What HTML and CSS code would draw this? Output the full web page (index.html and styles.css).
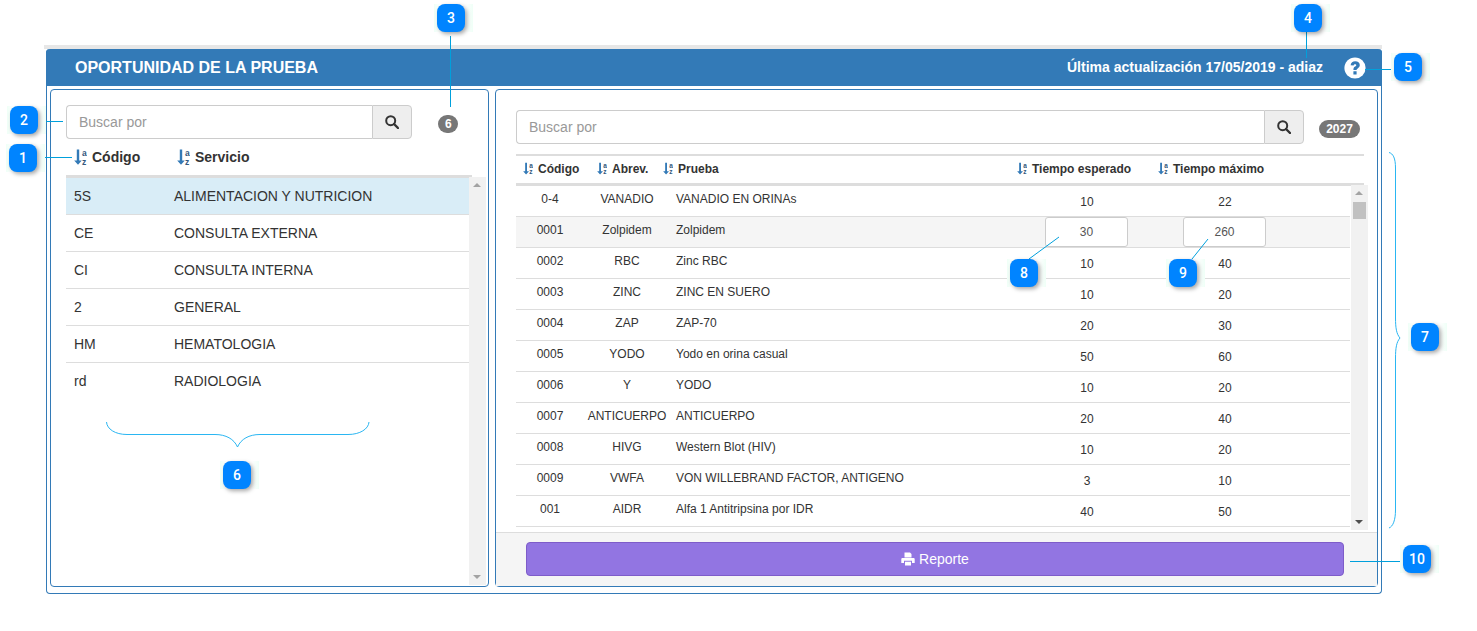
FILE: index.html
```html
<!DOCTYPE html>
<html lang="es">
<head>
<meta charset="utf-8">
<title>Oportunidad de la prueba</title>
<link rel="stylesheet" href="styles.css">
</head>
<body>
<svg class="defs" width="0" height="0" aria-hidden="true">
  <symbol id="search" viewBox="0 0 14 14">
    <circle cx="5.700" cy="5.700" r="4.500" fill="none" stroke="#333" stroke-width="2"/>
    <path d="M9 9l4 4" stroke="#333" stroke-width="2.400" stroke-linecap="round"/>
  </symbol>
</svg>

<div class="page">
  <div class="band"></div>
  <section class="panel">
    <header class="heading">
      <h1 class="title">OPORTUNIDAD DE LA PRUEBA</h1>
      <span class="updated">Última actualización 17/05/2019 - adiaz</span>
      <svg class="help" viewBox="0 0 22 22" aria-hidden="true">
        <circle cx="11" cy="11" r="10.600" fill="#fff"/>
        <path d="M6.600 8.200C6.900 5.600 8.800 4.200 11.200 4.200c2.700 0 4.600 1.500 4.600 3.800 0 1.800-1 2.700-2.100 3.400-.9.600-1.100.9-1.100 1.700H9.400c0-1.900.5-2.700 1.700-3.500.8-.5 1.200-.8 1.200-1.400 0-.6-.5-1-1.200-1-.8 0-1.300.5-1.500 1.300zM9.400 14.200h3.200v3.300H9.400z" fill="#337ab7"/>
      </svg>
    </header>
    <div class="panel-body">

      <div class="box box-left">
        <div class="toolbar toolbar-left">
          <div class="search search-left">
            <input class="search-input" type="text" placeholder="Buscar por">
            <button class="search-btn" type="button"><svg class="search-icon"><use href="#search"/></svg></button>
          </div>
          <span class="count count-left">6</span>
        </div>
        <div class="list-head">
          <div class="list-head-cell first"><svg class="sort-lg" viewBox="0 0 13 16" aria-hidden="true"><path d="M2.800 0.500h2.400v11h2.600L4 15.800 0.200 11.500h2.600z" fill="#337ab7"/><text x="8" y="7" class="sort-letter">a</text><text x="8" y="15.500" class="sort-letter">z</text></svg><b>Código</b></div>
          <div class="list-head-cell"><svg class="sort-lg" viewBox="0 0 13 16" aria-hidden="true"><path d="M2.800 0.500h2.400v11h2.600L4 15.800 0.200 11.500h2.600z" fill="#337ab7"/><text x="8" y="7" class="sort-letter">a</text><text x="8" y="15.500" class="sort-letter">z</text></svg><b>Servicio</b></div>
        </div>
        <div class="list-rule"></div>
        <div class="list-wrap">
          <div class="list">
            <div class="list-row selected"><span>5S</span><span>ALIMENTACION Y NUTRICION</span></div>
            <div class="list-row"><span>CE</span><span>CONSULTA EXTERNA</span></div>
            <div class="list-row"><span>CI</span><span>CONSULTA INTERNA</span></div>
            <div class="list-row"><span>2</span><span>GENERAL</span></div>
            <div class="list-row"><span>HM</span><span>HEMATOLOGIA</span></div>
            <div class="list-row last"><span>rd</span><span>RADIOLOGIA</span></div>
          </div>
          <div class="scrollbar scrollbar-left">
            <i class="arrow up pale"></i>
            <i class="arrow down pale"></i>
          </div>
        </div>
      </div>

      <div class="box box-right">
        <div class="toolbar toolbar-right">
          <div class="search search-right">
            <input class="search-input" type="text" placeholder="Buscar por">
            <button class="search-btn" type="button"><svg class="search-icon"><use href="#search"/></svg></button>
          </div>
          <span class="count count-right">2027</span>
        </div>
        <div class="table-head">
          <div class="th"><svg class="sort-sm" viewBox="0 0 13 16" aria-hidden="true"><path d="M2.800 0.500h2.400v11h2.600L4 15.800 0.200 11.500h2.600z" fill="#337ab7"/><text x="8" y="7" class="sort-letter">a</text><text x="8" y="15.500" class="sort-letter">z</text></svg><b>Código</b></div>
          <div class="th"><svg class="sort-sm" viewBox="0 0 13 16" aria-hidden="true"><path d="M2.800 0.500h2.400v11h2.600L4 15.800 0.200 11.500h2.600z" fill="#337ab7"/><text x="8" y="7" class="sort-letter">a</text><text x="8" y="15.500" class="sort-letter">z</text></svg><b>Abrev.</b></div>
          <div class="th"><svg class="sort-sm" viewBox="0 0 13 16" aria-hidden="true"><path d="M2.800 0.500h2.400v11h2.600L4 15.800 0.200 11.500h2.600z" fill="#337ab7"/><text x="8" y="7" class="sort-letter">a</text><text x="8" y="15.500" class="sort-letter">z</text></svg><b>Prueba</b></div>
          <div class="th"><svg class="sort-sm" viewBox="0 0 13 16" aria-hidden="true"><path d="M2.800 0.500h2.400v11h2.600L4 15.800 0.200 11.500h2.600z" fill="#337ab7"/><text x="8" y="7" class="sort-letter">a</text><text x="8" y="15.500" class="sort-letter">z</text></svg><b>Tiempo esperado</b></div>
          <div class="th"><svg class="sort-sm" viewBox="0 0 13 16" aria-hidden="true"><path d="M2.800 0.500h2.400v11h2.600L4 15.800 0.200 11.500h2.600z" fill="#337ab7"/><text x="8" y="7" class="sort-letter">a</text><text x="8" y="15.500" class="sort-letter">z</text></svg><b>Tiempo máximo</b></div>
        </div>
        <div class="table-wrap">
          <div class="rows">
            <div class="row"><span class="c">0-4</span><span class="c">VANADIO</span><span class="l">VANADIO EN ORINAs</span><span class="n">10</span><span class="n">22</span></div>
            <div class="row editing"><span class="c">0001</span><span class="c">Zolpidem</span><span class="l">Zolpidem</span><span class="e"><input class="cell-input" type="text" value="30"></span><span class="e"><input class="cell-input" type="text" value="260"></span></div>
            <div class="row"><span class="c">0002</span><span class="c">RBC</span><span class="l">Zinc RBC</span><span class="n">10</span><span class="n">40</span></div>
            <div class="row"><span class="c">0003</span><span class="c">ZINC</span><span class="l">ZINC EN SUERO</span><span class="n">10</span><span class="n">20</span></div>
            <div class="row"><span class="c">0004</span><span class="c">ZAP</span><span class="l">ZAP-70</span><span class="n">20</span><span class="n">30</span></div>
            <div class="row"><span class="c">0005</span><span class="c">YODO</span><span class="l">Yodo en orina casual</span><span class="n">50</span><span class="n">60</span></div>
            <div class="row"><span class="c">0006</span><span class="c">Y</span><span class="l">YODO</span><span class="n">10</span><span class="n">20</span></div>
            <div class="row"><span class="c">0007</span><span class="c">ANTICUERPO</span><span class="l">ANTICUERPO</span><span class="n">20</span><span class="n">40</span></div>
            <div class="row"><span class="c">0008</span><span class="c">HIVG</span><span class="l">Western Blot (HIV)</span><span class="n">10</span><span class="n">20</span></div>
            <div class="row"><span class="c">0009</span><span class="c">VWFA</span><span class="l">VON WILLEBRAND FACTOR, ANTIGENO</span><span class="n">3</span><span class="n">10</span></div>
            <div class="row"><span class="c">001</span><span class="c">AIDR</span><span class="l">Alfa 1 Antitripsina por IDR</span><span class="n">40</span><span class="n">50</span></div>
          </div>
          <div class="scrollbar scrollbar-right">
            <i class="arrow up pale"></i>
            <i class="thumb"></i>
            <i class="arrow down dark"></i>
          </div>
        </div>
        <footer class="footer">
          <button class="report" type="button">
            <svg class="print" viewBox="0 0 14 14" aria-hidden="true">
              <path fill-rule="evenodd" d="M3.500 0.500h5.500l1.500 1.500v3.500h-7zM1.500 6h11c.7 0 1.200.5 1.200 1.200v3.800h-2.700v-2.200H3v2.200H.300V7.200C.3 6.500.8 6 1.500 6zM4 9.800h6v3.700H4z" fill="#fff"/>
            </svg>
            <span>Reporte</span>
          </button>
        </footer>
      </div>

    </div>
  </section>
</div>

<svg class="leaders" viewBox="0 0 1477 631" aria-hidden="true">
  <g class="leader">
    <path d="M37 157.500H72"/>
    <path d="M38 121.500H63"/>
    <path d="M450.500 36V107"/>
    <path d="M1306.500 32V58"/>
    <path d="M1365 69.500H1394"/>
    <path d="M1029 259L1059 237"/>
    <path d="M1192 259L1208 239"/>
    <path d="M1350 561.500H1403"/>
  </g>
  <g class="brace">
    <path d="M106.500 422C107 429 115 434.500 127 434.500H215C226 434.500 234 439 237.500 447C241 439 249 434.500 260 434.500H348C360 434.500 368.500 429 369 422"/>
    <path d="M1389 152.500C1393 153.500 1395.500 158 1395.500 168V318C1395.500 328 1396.500 334 1400 338C1396.500 342 1395.500 348 1395.500 358V510C1395.500 520 1393 526.500 1389 528"/>
  </g>
</svg>

<div class="callout c1"><span class="num">1</span></div>
<div class="callout c2"><span class="num">2</span></div>
<div class="callout c3"><span class="num">3</span></div>
<div class="callout c4"><span class="num">4</span></div>
<div class="callout c5"><span class="num">5</span></div>
<div class="callout c6"><span class="num">6</span></div>
<div class="callout c7"><span class="num">7</span></div>
<div class="callout c8"><span class="num">8</span></div>
<div class="callout c9"><span class="num">9</span></div>
<div class="callout c10"><span class="num">10</span></div>
</body>
</html>
```
FILE: styles.css
```css
* { box-sizing: border-box; }
html, body { margin: 0; padding: 0; background: #fff; }
body {
  position: relative;
  height: 631px;
  overflow: hidden;
  font-family: "Liberation Sans", Arial, sans-serif;
  font-size: 14px;
  color: #333;
}
.defs { position: absolute; }
.sort-letter { font: bold 8.5px "Liberation Sans", sans-serif; fill: #33587c; }

.page { padding-top: 45px; }
.band { width: 1338px; height: 4px; margin-left: 44px; background: #e7e7e7; }
.panel {
  width: 1336px;
  height: 545px;
  margin-left: 46px;
  border: 1px solid #337ab7;
  border-top: 0;
  border-radius: 4px;
  background: #fff;
}
.heading {
  display: flex;
  align-items: center;
  height: 37px;
  margin: 0 -1px;
  padding: 0 16px 0 29px;
  background: #337ab7;
  color: #fff;
  border-radius: 4px 4px 0 0;
}
.title { margin: 0; font-size: 16px; font-weight: bold; line-height: 37px; }
.updated { margin: 0 0 2px auto; font-size: 14px; font-weight: bold; }
.help { width: 22px; height: 22px; margin-left: 21px; }

.panel-body { display: flex; gap: 6px; padding: 3px 3px 0; }
.box {
  display: flex;
  flex-direction: column;
  height: 498px;
  border: 1px solid #337ab7;
  border-radius: 4px;
}
.box-left { width: 439px; padding: 15px 2px 1px 15px; }
.box-right { width: 883px; padding-top: 20px; }

.toolbar { display: flex; align-items: center; }
.toolbar-left { gap: 26px; }
.toolbar-right { gap: 15px; padding-left: 20px; }
.search { display: flex; height: 34px; }
.search-left { width: 346px; }
.search-right { width: 788px; }
.search-input {
  flex: 1;
  min-width: 0;
  height: 34px;
  padding: 0 12px;
  border: 1px solid #ccc;
  border-right: 0;
  border-radius: 4px 0 0 4px;
  font: 14px "Liberation Sans", Arial, sans-serif;
  color: #555;
  background: #fff;
}
.search-input::placeholder { color: #999; opacity: 1; }
.search-btn {
  display: flex;
  align-items: center;
  justify-content: center;
  width: 40px;
  height: 34px;
  padding: 0;
  border: 1px solid #ccc;
  border-radius: 0 4px 4px 0;
  background: #eee;
}
.search-icon { width: 14px; height: 14px; }
.count {
  margin-top: 4px;
  height: 18px;
  padding: 0 7px;
  border-radius: 10px;
  background: #777;
  color: #fff;
  font-size: 12px;
  font-weight: bold;
  line-height: 18px;
  text-align: center;
}
.count-left { width: 20px; }
.count-right { width: 41px; padding: 0; }

.list-head { display: flex; height: 36px; padding-left: 8px; align-items: center; }
.list-head-cell { display: flex; align-items: center; white-space: nowrap; }
.list-head-cell.first { width: 103px; }
.sort-lg { width: 13px; height: 16px; margin-right: 5px; }
.list-rule { width: 406px; height: 3px; background: #ddd; }
.list-wrap { display: flex; flex: 1; min-height: 0; }
.list { width: 403px; }
.list-row {
  display: grid;
  grid-template-columns: 100px 1fr;
  align-items: center;
  height: 37px;
  padding: 0 0 0 8px;
  border-bottom: 1px solid #ddd;
}
.list-row.selected { background: #d9edf7; }
.list-row.last { border-bottom-color: transparent; }

.scrollbar {
  position: relative;
  flex: none;
  width: 17px;
  background: #f1f1f1;
}
.scrollbar-left { margin-top: -1px; }
.scrollbar-right { height: 345px; margin-top: -1px; margin-left: 1px; }
.arrow {
  position: absolute;
  left: 4px;
  width: 0;
  height: 0;
  border-left: 4px solid transparent;
  border-right: 4px solid transparent;
}
.arrow.up { top: 6px; border-bottom: 4px solid #a3a3a3; }
.arrow.down { bottom: 6px; border-top: 4px solid #a3a3a3; }
.arrow.down.dark { border-top-color: #505050; }
.thumb {
  position: absolute;
  top: 17px;
  left: 2px;
  width: 13px;
  height: 17px;
  background: #c1c1c1;
}

.table-head {
  display: grid;
  grid-template-columns: 74px 66px 354px 141px 1fr;
  align-items: center;
  width: 848px;
  height: 32px;
  margin: 10px 0 0 20px;
  padding: 0 0 2px 7px;
  border-top: 2px solid #ddd;
  border-bottom: 3px solid #ddd;
  font-size: 12px;
}
.th { display: flex; align-items: center; white-space: nowrap; }
.sort-sm { width: 10px; height: 13px; margin-right: 5px; }
.table-wrap { display: flex; margin-left: 20px; height: 346px; }
.rows { width: 834px; }
.row {
  display: grid;
  grid-template-columns: 68px 86px 347px 140px 136px 57px;
  height: 31px;
  border-bottom: 1px solid #ddd;
  font-size: 12px;
  line-height: 14px;
}
.row.editing { background: #f5f5f5; }
.c { padding-top: 6px; text-align: center; white-space: nowrap; }
.l { padding: 6px 0 0 6px; white-space: nowrap; }
.n { padding-top: 9px; text-align: center; }
.e { display: flex; justify-content: center; padding-right: 1px; }
.cell-input {
  width: 83px;
  height: 30px;
  padding: 0;
  border: 1px solid #ccc;
  border-radius: 3px;
  background: #fff;
  color: #555;
  font: 12px "Liberation Sans", Arial, sans-serif;
  text-align: center;
}

.footer {
  height: 54px;
  margin-top: auto;
  padding: 9px 33px 10px 30px;
  border-top: 1px solid #ddd;
  background: #f5f5f5;
}
.report {
  display: flex;
  align-items: center;
  justify-content: center;
  gap: 4px;
  width: 100%;
  height: 34px;
  padding: 0;
  border: 1px solid #7e5cc9;
  border-radius: 4px;
  background: #9275e2;
  color: #fff;
  font: 14px "Liberation Sans", Arial, sans-serif;
}
.print { width: 14px; height: 14px; }

.leaders { position: absolute; left: 0; top: 0; width: 1477px; height: 631px; pointer-events: none; }
.leader path { fill: none; stroke: #00a0dc; stroke-width: 1; }
.brace path { fill: none; stroke: #2ab6f2; stroke-width: 1; }

.callout {
  position: absolute;
  width: 28px;
  height: 28px;
}
.callout::before {
  content: "";
  position: absolute;
  left: -3px;
  top: 0;
  width: 39px;
  height: 28px;
  background: linear-gradient(90deg, #effff7 0, #fff 18%, #fff 82%, #effff7 100%);
}
.num {
  position: absolute;
  inset: 0;
  border-radius: 8px;
  background: #0084ff;
  box-shadow: 2px 2px 4px rgba(0, 0, 0, 0.35);
  color: #fff;
  font: 500 14px/28px Roboto, "Liberation Sans", sans-serif;
  text-align: center;
}
.c1 { left: 9px; top: 144px; }
.c2 { left: 10px; top: 106px; }
.c3 { left: 437px; top: 4px; }
.c4 { left: 1294px; top: 4px; }
.c5 { left: 1394px; top: 53px; }
.c6 { left: 223px; top: 461px; }
.c7 { left: 1411px; top: 323px; }
.c8 { left: 1010px; top: 259px; }
.c9 { left: 1169px; top: 259px; }
.c10 { left: 1403px; top: 545px; }
```
